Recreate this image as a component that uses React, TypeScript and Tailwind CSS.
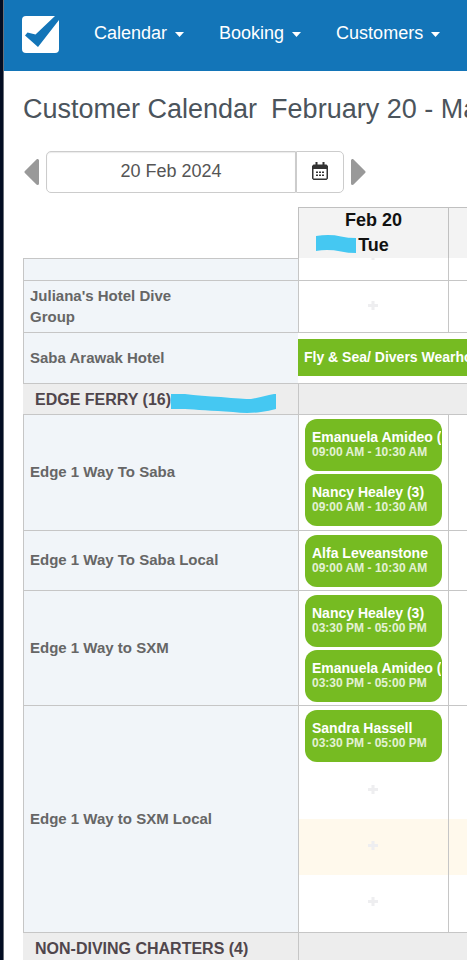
import React from 'react';

type Booking = { name: string; time: string };

const navItems = ['Calendar', 'Booking', 'Customers'];

function Logo() {
  return (
    <svg width="37" height="37" viewBox="0 0 37 37" aria-hidden="true">
      <rect width="37" height="37" rx="4" fill="#fff" />
      <path d="M37 0v4L16 31 3 19.500 5.500 16.500 13.500 18.500 33 0z" fill="#1375b8" />
    </svg>
  );
}

function Caret() {
  return (
    <svg width="9" height="5" viewBox="0 0 9 5" className="mt-[2px]" aria-hidden="true">
      <path d="M0 0h9L4.500 5z" fill="#fff" />
    </svg>
  );
}

function CalendarIcon() {
  return (
    <svg width="16" height="18" viewBox="0 0 16 18" aria-hidden="true">
      <path
        fill="#333"
        fillRule="evenodd"
        d="M3.500 0h2v2.500h5V0h2v2.500h2L16 4v12.500L14.500 18h-13L0 16.500V4l1.500-1.500h2zM1.500 7v9.500h13V7z"
      />
      <path
        fill="#333"
        d="M4 9.500h2v1.500H4zM7 9.500h2v1.500H7zM10 9.500h2v1.500h-2zM4 12.500h2v1.500H4zM7 12.500h2v1.500H7zM10 12.500h2v1.500h-2z"
      />
    </svg>
  );
}

function Plus() {
  return (
    <button type="button" aria-label="Add booking" className="block">
      <svg width="10" height="9" viewBox="0 0 10 9" aria-hidden="true">
        <path d="M3.500 0h3v3H10v3H6.500v3h-3V6H0V3h3.500z" fill="#eeeef0" />
      </svg>
    </button>
  );
}

function Slot({ tinted = false }: { tinted?: boolean }) {
  return (
    <div className={`flex h-14 items-center justify-center pb-1 pr-[2px] ${tinted ? 'bg-[#fff9ec]' : ''}`}>
      <Plus />
    </div>
  );
}

function BookingCard({ name, time }: Booking) {
  return (
    <button
      type="button"
      className="block h-[52px] w-full overflow-hidden whitespace-nowrap rounded-xl bg-[#76bb22] pb-[2px] pl-[7px] text-left font-bold"
    >
      <span className="mr-px block overflow-hidden text-[14px] leading-[16px] text-white">{name}</span>
      <span className="block text-[12px] leading-[14px] text-white/80">{time}</span>
    </button>
  );
}

function Label({ children }: { children?: React.ReactNode }) {
  return (
    <th
      scope="row"
      className="border-l border-t border-[#c6c6c6] bg-[#f1f5f9] pb-[2px] pl-[6px] text-left align-middle text-[15px] font-bold leading-[21px] text-[#666]"
    >
      <div className="max-w-[200px]">{children}</div>
    </th>
  );
}

function Section({ title, children }: { title: string; children?: React.ReactNode }) {
  return (
    <tr className="h-[31px] bg-[#ededed]">
      <th
        scope="rowgroup"
        className="border-t border-[#c6c6c6] pl-3 text-left text-[16px] font-bold leading-[20px] text-[#50464c]"
      >
        <div className="flex items-center whitespace-nowrap pt-px">
          {title}
          {children}
        </div>
      </th>
      <td colSpan={2} className="border-l border-t border-[#c6c6c6]" />
    </tr>
  );
}

const cell = 'border-l border-t border-[#c6c6c6] p-0 align-top';

function BookingRow({ label, bookings, height }: { label: string; bookings: Booking[]; height: string }) {
  return (
    <tr className={height}>
      <Label>{label}</Label>
      <td className={cell}>
        <div className="flex flex-col gap-[3px] px-[6px] pt-1">
          {bookings.map((b) => (
            <BookingCard key={b.name} name={b.name} time={b.time} />
          ))}
        </div>
      </td>
      <td className={cell} />
    </tr>
  );
}

export default function App() {
  return (
    <div className="h-screen overflow-hidden border-l-[3px] border-[#020d22] bg-white font-['Liberation_Sans',Arial,sans-serif]">
      <div className="border-l border-[#6b7078]">
        <header className="flex h-[71px] items-center gap-[35px] bg-[#1375b8] pb-[2px] pl-[18px]">
          <a href="#home" aria-label="Home" className="block shrink-0">
            <Logo />
          </a>
          <nav className="flex gap-[35px] pb-[3px]">
            {navItems.map((item) => (
              <button key={item} type="button" className="flex items-center gap-2 text-[18px] leading-[24px] text-white">
                {item}
                <Caret />
              </button>
            ))}
          </nav>
        </header>

        <main className="overflow-hidden pl-[19px] pt-[22px]">
          <h1 className="flex gap-[14px] whitespace-nowrap text-[27px] leading-[32px] text-[#4b545c]">
            <span>Customer Calendar</span>
            <span>February 20 - March 4</span>
          </h1>

          <div className="mt-[26px] flex items-center">
            <button type="button" aria-label="Previous">
              <svg width="16" height="26" viewBox="0 0 16 26" aria-hidden="true">
                <path d="M14.500 1.500v23L3 13z" fill="#999" stroke="#999" strokeWidth="3" strokeLinejoin="round" />
              </svg>
            </button>
            <div className="ml-[7px] flex h-[42px] w-[298px]">
              <input
                aria-label="Date"
                defaultValue="20 Feb 2024"
                className="min-w-0 flex-1 rounded-l-[5px] border border-[#ccc] bg-white pb-px text-center text-[18px] text-[#555] shadow-[inset_0_1px_1px_rgba(0,0,0,0.08)] outline-none"
              />
              <button
                type="button"
                aria-label="Open calendar"
                className="flex w-12 items-center justify-center rounded-r-[5px] border border-[#ccc] bg-white pb-[3px]"
              >
                <CalendarIcon />
              </button>
            </div>
            <button type="button" aria-label="Next" className="ml-[6px]">
              <svg width="16" height="26" viewBox="0 0 16 26" aria-hidden="true">
                <path d="M2.500 1.500v23L14 13z" fill="#999" stroke="#999" strokeWidth="3" strokeLinejoin="round" />
              </svg>
            </button>
          </div>

          <table className="mt-[14px] w-full table-fixed border-separate border-spacing-0">
            <colgroup>
              <col className="w-[275px]" />
              <col className="w-[150px]" />
              <col />
            </colgroup>
            <thead>
              <tr className="h-[51px]">
                <td />
                <th
                  scope="col"
                  className="border-l border-t border-[#c0c0c0] bg-[#f3f3f3] p-0 text-center align-top text-[18px] font-bold leading-[25px] text-[#111]"
                >
                  <div>Feb 20</div>
                  <div>
                    <span className="relative">
                      Tue
                      <svg
                        width="40"
                        height="18"
                        viewBox="0 0 40 18"
                        className="absolute right-full top-0 mr-[2px]"
                        aria-hidden="true"
                      >
                        <path d="M0 1Q14-1 25 1.500 32 3 40 3V18Q32 18 25 16.500 12 14 0 16z" fill="#45c8f2" />
                      </svg>
                    </span>
                  </div>
                </th>
                <td className="border-l border-t border-[#c0c0c0] bg-[#f3f3f3]" />
              </tr>
            </thead>
            <tbody>
              <tr className="h-[22px]">
                <Label />
                <td className="border-l border-[#c6c6c6] p-0 align-top">
                  <div className="flex h-[21px] justify-center overflow-hidden pr-[2px]">
                    <div className="-mt-[7px]">
                      <Plus />
                    </div>
                  </div>
                </td>
                <td className="border-l border-[#c6c6c6]" />
              </tr>
              <tr className="h-[52px]">
                <Label>
                  Juliana's Hotel Dive
                  <br />
                  Group
                </Label>
                <td className="border-l border-t border-[#c6c6c6] p-0 align-middle">
                  <div className="flex justify-center pb-[2px] pr-[2px]">
                    <Plus />
                  </div>
                </td>
                <td className={cell} />
              </tr>
              <tr className="h-[51px]">
                <Label>Saba Arawak Hotel</Label>
                <td colSpan={2} className="border-t border-[#c6c6c6] p-0 pb-[2px] align-middle">
                  <button
                    type="button"
                    className="block h-[37px] w-full overflow-hidden whitespace-nowrap bg-[#76bb22] pl-[6px] text-left text-[14px] font-bold text-white"
                  >
                    Fly &amp; Sea/ Divers Wearhouse
                  </button>
                </td>
              </tr>
              <Section title="EDGE FERRY (16)">
                <svg width="105" height="20" viewBox="0 0 105 20" className="mt-1 -mb-1 shrink-0" aria-hidden="true">
                  <path
                    d="M0 0H14Q30 2 50 3 72 5 80 5 90 3 98 1L103 0H105V15Q98 17 90 18 76 20 62 18 30 16 14 15H0z"
                    fill="#45c8f2"
                  />
                </svg>
              </Section>
              <BookingRow
                label="Edge 1 Way To Saba"
                height="h-[116px]"
                bookings={[
                  { name: 'Emanuela Amideo (2)', time: '09:00 AM - 10:30 AM' },
                  { name: 'Nancy Healey (3)', time: '09:00 AM - 10:30 AM' },
                ]}
              />
              <BookingRow
                label="Edge 1 Way To Saba Local"
                height="h-[60px]"
                bookings={[{ name: 'Alfa Leveanstone', time: '09:00 AM - 10:30 AM' }]}
              />
              <BookingRow
                label="Edge 1 Way to SXM"
                height="h-[115px]"
                bookings={[
                  { name: 'Nancy Healey (3)', time: '03:30 PM - 05:00 PM' },
                  { name: 'Emanuela Amideo (2)', time: '03:30 PM - 05:00 PM' },
                ]}
              />
              <tr className="h-[227px]">
                <Label>Edge 1 Way to SXM Local</Label>
                <td className={cell}>
                  <div className="h-[57px] px-[6px] pt-1">
                    <BookingCard name="Sandra Hassell" time="03:30 PM - 05:00 PM" />
                  </div>
                  <Slot />
                  <Slot tinted />
                  <Slot />
                </td>
                <td className={cell}>
                  <div className="mt-[113px] h-14 bg-[#fff9ec]" />
                </td>
              </tr>
              <Section title="NON-DIVING CHARTERS (4)" />
            </tbody>
          </table>
        </main>
      </div>
    </div>
  );
}
